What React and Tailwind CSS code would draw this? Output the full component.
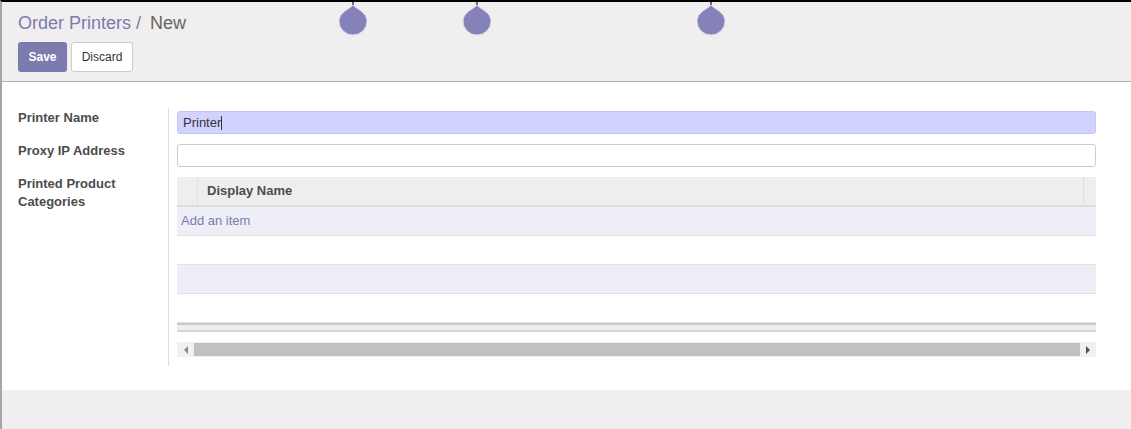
import React from 'react';

const Balloon = ({ left }) => (
  <svg
    className="absolute top-0"
    style={{ left }}
    width="32"
    height="36"
    viewBox="0 0 32 36"
  >
    <line x1="16" y1="0" x2="16" y2="5" stroke="#3f3d6e" strokeWidth="1.5" />
    <path
      d="M16 3 C19 7 30 10 30 19 A14 14 0 0 1 2 19 C2 10 13 7 16 3 Z"
      fill="#8482b9"
      stroke="#d9d8ea"
      strokeWidth="1"
    />
  </svg>
);

const rows = ['add', '', 'alt', ''];

const App = () => {
  return (
    <div className="relative h-[429px] border-t-2 border-black border-l-2 border-l-[#a6a6a6] bg-[#f0eeee] font-['Liberation_Sans',Arial,sans-serif] overflow-hidden">
      <Balloon left={335} />
      <Balloon left={459} />
      <Balloon left={693} />

      <header className="h-[80px] border-b border-[#b3b3b3] px-4 pt-[10px]">
        <div className="text-[18px] leading-[22px]">
          <span className="text-[#7c7bad]">Order Printers</span>
          <span className="text-[#7c7bad]"> / </span>
          <span className="text-[#666666] ml-[4px]">New</span>
        </div>
        <div className="mt-[8px] flex gap-[4px]">
          <button className="h-[30px] w-[49px] rounded-[3px] bg-[#7c7bad] text-white text-[12px] font-bold">
            Save
          </button>
          <button className="h-[30px] w-[62px] rounded-[3px] bg-white border border-[#cccccc] text-[#333333] text-[12px]">
            Discard
          </button>
        </div>
      </header>

      <main className="bg-white pt-[26px] pb-[24px] flex">
        <div className="w-[167px] shrink-0 border-r border-[#dddddd] pl-4 pt-px text-[13px] leading-[18px] font-bold text-[#4c4c4c]">
          <div className="mb-[15px]">Printer Name</div>
          <div className="mb-[15px]">Proxy IP Address</div>
          <div>
            Printed Product
            <br />
            Categories
          </div>
        </div>

        <div className="flex-1 pl-[8px] pr-[35px] pt-[3px] pb-[9px]">
          <div className="h-[23px] rounded-[3px] bg-[#d2d2ff] border border-[#c6c6ee] px-[5px] text-[13px] leading-[21px] text-[#333333] flex items-center">
            Printer<span className="inline-block w-px h-[14px] bg-[#333333]" />
          </div>
          <div className="mt-[10px] h-[23px] rounded-[3px] bg-white border border-[#cccccc]" />

          <div className="mt-[10px]">
            <div className="h-[30px] bg-[#eeeeee] border-b-2 border-[#dddddd] flex text-[13px] font-bold text-[#4c4c4c]">
              <div className="w-[21px] border-r border-[#e4e4e4]" />
              <div className="flex-1 pl-[9px] flex items-center">Display Name</div>
              <div className="w-[13px] border-l border-[#dddddd]" />
            </div>
            {rows.map((r, i) => (
              <div
                key={i}
                className={
                  'h-[29px] border-b border-[#e2e2e2] text-[13px] flex items-center pl-[4px] ' +
                  (i % 2 === 0 ? 'bg-[#eeeef6]' : 'bg-white')
                }
              >
                {r === 'add' && <span className="text-[#7c7bad]">Add an item</span>}
              </div>
            ))}
            <div className="h-[9px] border-y-2 border-t-[#c8c8c8] border-b-[#d6d6d6] bg-[#eeeeee]" />

            <div className="mt-[10px] h-[15px] bg-[#f1f1f1] flex items-center">
              <div className="w-[17px] h-full flex items-center justify-center">
                <span className="w-0 h-0 border-y-[4px] border-y-transparent border-r-[4px] border-r-[#8a8a8a]" />
              </div>
              <div className="flex-1 h-[13px] bg-[#c1c1c1]" />
              <div className="w-[16px] h-full flex items-center justify-center">
                <span className="w-0 h-0 border-y-[4px] border-y-transparent border-l-[4px] border-l-[#505050]" />
              </div>
            </div>
          </div>
        </div>
      </main>
    </div>
  );
};

export default App;
